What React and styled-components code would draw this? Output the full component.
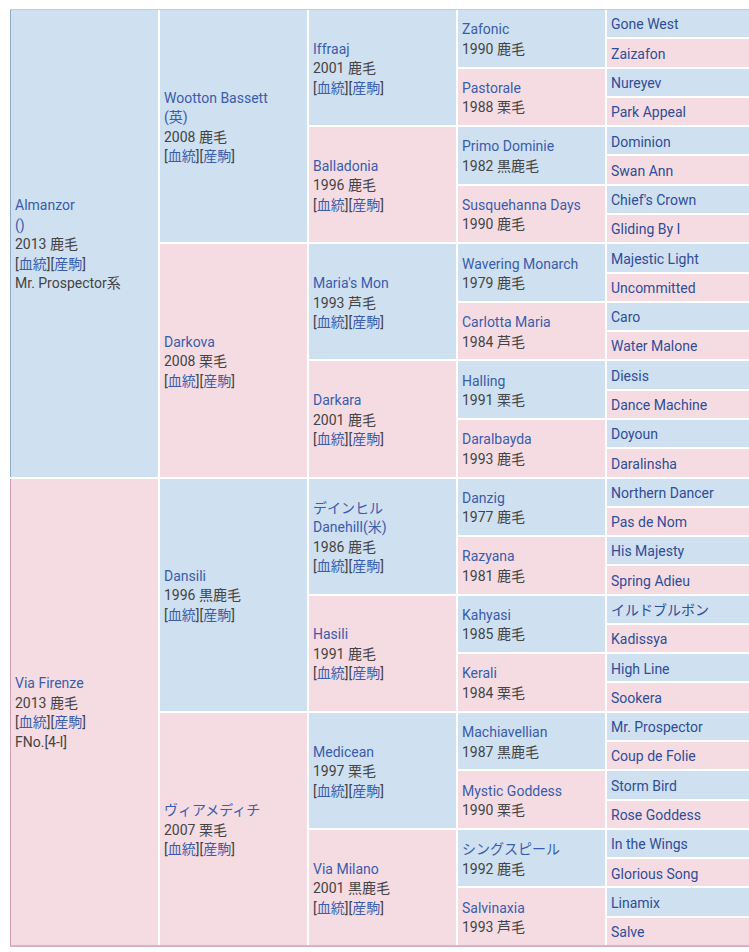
import React from "react";
import styled, { createGlobalStyle } from "styled-components";

const GlobalStyle = createGlobalStyle`
  html, body { margin: 0; padding: 0; background: #ffffff; }
  body {
    font-family: Roboto, "Noto Sans", "Noto Sans CJK JP", sans-serif;
    font-size: 14px;
    line-height: 19.5px;
    color: #444444;
  }
`;

const Page = styled.div`
  padding: 9px 0 0 10px;
  width: 739px;
  overflow: hidden;
`;

const Pedigree = styled.div`
  display: grid;
  grid-template-columns: 148px 147px 147px 147px 1fr;
  grid-template-rows: repeat(32, 1fr);
  grid-auto-flow: column;
  gap: 2px;
  height: 935px;
  border-top: 1px solid #b7cfe7;
  border-bottom: 2px solid #dcb0bd;
  background: #ffffff;
`;

const Cell = styled.div`
  grid-row: span ${(p) => p.$span};
  background: ${(p) => (p.$female ? "#f5dce3" : "#cfe0f0")};
  border-left: ${(p) =>
    p.$edge ? `1px solid ${p.$female ? "#cf9fad" : "#8fabc9"}` : "none"};
  padding: 3px 4px 0;
  display: flex;
  flex-direction: column;
  justify-content: center;
  min-width: 0;
  overflow: hidden;
`;

const Name = styled.span`
  color: ${(p) => (p.$leaf ? "#2f4d98" : "#3a5cad")};
  white-space: nowrap;
`;

const Line = styled.span`
  color: #444444;
  white-space: nowrap;
`;

const Link = styled.span`
  color: #3a5cad;
`;

const Refs = () => (
  <Line>
    [<Link>血統</Link>][<Link>産駒</Link>]
  </Line>
);

const col1 = [
  { names: ["Almanzor", "()"], year: "2013 鹿毛", refs: true, extra: "Mr. Prospector系" },
  { names: ["Via Firenze"], year: "2013 鹿毛", refs: true, extra: "FNo.[4-l]" },
];

const col2 = [
  { names: ["Wootton Bassett", "(英)"], year: "2008 鹿毛", refs: true },
  { names: ["Darkova"], year: "2008 栗毛", refs: true },
  { names: ["Dansili"], year: "1996 黒鹿毛", refs: true },
  { names: ["ヴィアメディチ"], year: "2007 栗毛", refs: true },
];

const col3 = [
  { names: ["Iffraaj"], year: "2001 鹿毛", refs: true },
  { names: ["Balladonia"], year: "1996 鹿毛", refs: true },
  { names: ["Maria's Mon"], year: "1993 芦毛", refs: true },
  { names: ["Darkara"], year: "2001 鹿毛", refs: true },
  { names: ["デインヒル", "Danehill(米)"], year: "1986 鹿毛", refs: true },
  { names: ["Hasili"], year: "1991 鹿毛", refs: true },
  { names: ["Medicean"], year: "1997 栗毛", refs: true },
  { names: ["Via Milano"], year: "2001 黒鹿毛", refs: true },
];

const col4 = [
  ["Zafonic", "1990 鹿毛"],
  ["Pastorale", "1988 栗毛"],
  ["Primo Dominie", "1982 黒鹿毛"],
  ["Susquehanna Days", "1990 鹿毛"],
  ["Wavering Monarch", "1979 鹿毛"],
  ["Carlotta Maria", "1984 芦毛"],
  ["Halling", "1991 栗毛"],
  ["Daralbayda", "1993 鹿毛"],
  ["Danzig", "1977 鹿毛"],
  ["Razyana", "1981 鹿毛"],
  ["Kahyasi", "1985 鹿毛"],
  ["Kerali", "1984 栗毛"],
  ["Machiavellian", "1987 黒鹿毛"],
  ["Mystic Goddess", "1990 栗毛"],
  ["シングスピール", "1992 鹿毛"],
  ["Salvinaxia", "1993 芦毛"],
].map(([n, y]) => ({ names: [n], year: y }));

const col5 = [
  "Gone West", "Zaizafon", "Nureyev", "Park Appeal",
  "Dominion", "Swan Ann", "Chief's Crown", "Gliding By I",
  "Majestic Light", "Uncommitted", "Caro", "Water Malone",
  "Diesis", "Dance Machine", "Doyoun", "Daralinsha",
  "Northern Dancer", "Pas de Nom", "His Majesty", "Spring Adieu",
  "イルドブルボン", "Kadissya", "High Line", "Sookera",
  "Mr. Prospector", "Coup de Folie", "Storm Bird", "Rose Goddess",
  "In the Wings", "Glorious Song", "Linamix", "Salve",
];

const Horse = ({ h, span, female, edge }) => (
  <Cell $span={span} $female={female} $edge={edge}>
    {h.names.map((n) => (
      <Name key={n}>{n}</Name>
    ))}
    {h.year && <Line>{h.year}</Line>}
    {h.refs && <Refs />}
    {h.extra && <Line>{h.extra}</Line>}
  </Cell>
);

export default function App() {
  return (
    <>
      <GlobalStyle />
      <Page>
        <Pedigree>
          {col1.map((h, i) => (
            <Horse key={"a" + i} h={h} span={16} female={i % 2 === 1} edge />
          ))}
          {col2.map((h, i) => (
            <Horse key={"b" + i} h={h} span={8} female={i % 2 === 1} />
          ))}
          {col3.map((h, i) => (
            <Horse key={"c" + i} h={h} span={4} female={i % 2 === 1} />
          ))}
          {col4.map((h, i) => (
            <Horse key={"d" + i} h={h} span={2} female={i % 2 === 1} />
          ))}
          {col5.map((n, i) => (
            <Cell key={"e" + i} $span={1} $female={i % 2 === 1}>
              <Name $leaf>{n}</Name>
            </Cell>
          ))}
        </Pedigree>
      </Page>
    </>
  );
}
